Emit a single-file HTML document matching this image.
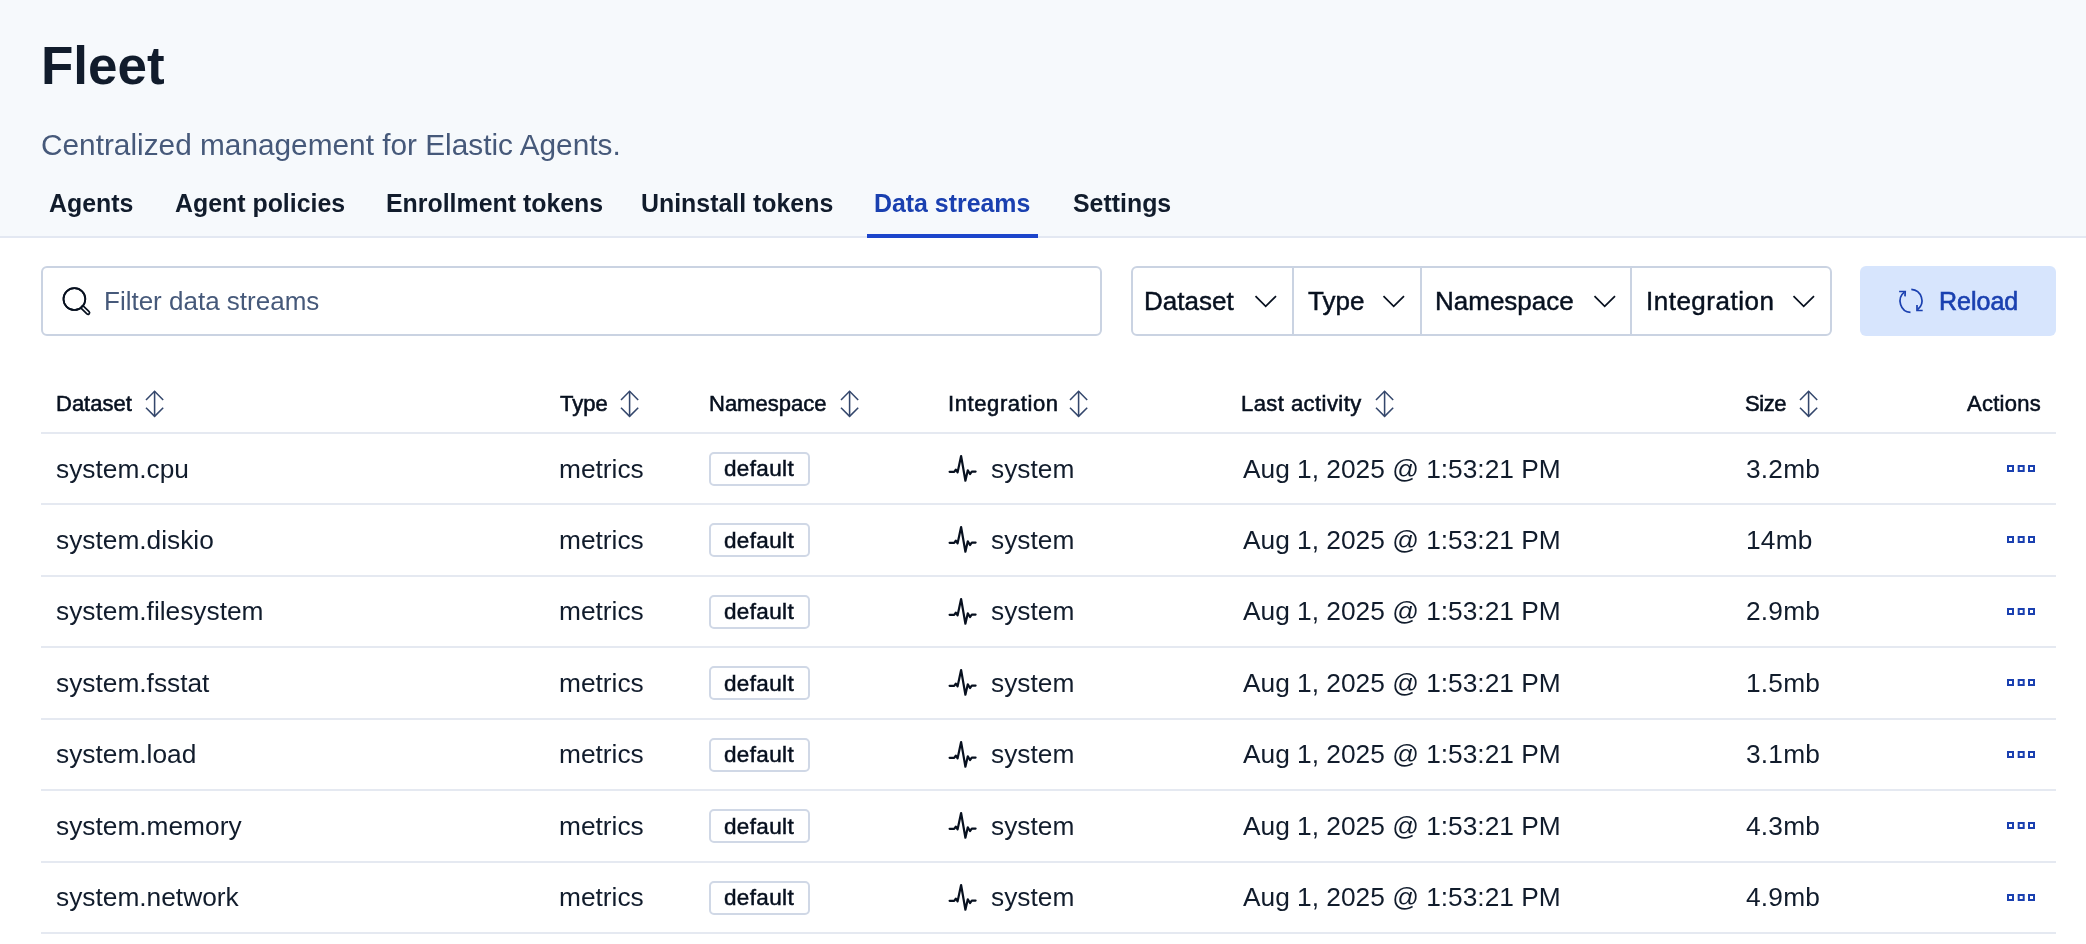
<!DOCTYPE html>
<html><head><meta charset="utf-8"><title>Fleet</title>
<style>
html,body{margin:0;padding:0;width:2086px;height:944px;overflow:hidden;background:#FFFFFF;font-family:"Liberation Sans",sans-serif;}
.a{position:absolute;white-space:nowrap;line-height:1;will-change:transform;}
.box{position:absolute;box-sizing:border-box;}
svg{position:absolute;overflow:visible;}
</style></head><body>
<div class="box" style="left:0;top:0;width:2086px;height:236px;background:#F6F9FC;"></div>
<div class="box" style="left:0;top:236px;width:2086px;height:2px;background:#E3E8F2;"></div>
<div class="a" style="left:41.30px;top:39.14px;font-size:53px;font-weight:700;color:#111C2C;">Fleet</div>
<div class="a" style="left:41.20px;top:130.07px;font-size:29.8px;font-weight:400;color:#46597A;">Centralized management for Elastic Agents.</div>
<div class="a" style="left:48.60px;top:191.42px;font-size:24.9px;font-weight:700;color:#111C2C;">Agents</div>
<div class="a" style="left:175.20px;top:191.42px;font-size:24.9px;font-weight:700;color:#111C2C;">Agent policies</div>
<div class="a" style="left:385.70px;top:191.42px;font-size:24.9px;font-weight:700;color:#111C2C;">Enrollment tokens</div>
<div class="a" style="left:641.20px;top:191.42px;font-size:24.9px;font-weight:700;color:#111C2C;">Uninstall tokens</div>
<div class="a" style="left:873.90px;top:191.42px;font-size:24.9px;font-weight:700;color:#1A40B0;">Data streams</div>
<div class="a" style="left:1073.30px;top:191.42px;font-size:24.9px;font-weight:700;color:#111C2C;">Settings</div>
<div class="box" style="left:867px;top:234px;width:171px;height:4px;background:#1C45CB;"></div>
<div class="box" style="left:41px;top:266px;width:1061px;height:70px;border:2px solid #CAD3E2;border-radius:6px;background:#fff;"></div>
<svg style="left:55px;top:280px" width="45" height="42" viewBox="0 0 45 42"><circle cx="19.4" cy="19.1" r="10.9" fill="none" stroke="#07101F" stroke-width="1.7"/><path d="M27.6 27.6 L33.0 32.8" stroke="#07101F" stroke-width="4.8" stroke-linecap="round"/><path d="M27.6 27.6 L33.0 32.8" stroke="#fff" stroke-width="1.4" stroke-linecap="round"/><circle cx="19.4" cy="19.1" r="10.9" fill="none" stroke="#07101F" stroke-width="1.7"/></svg>
<div class="a" style="left:103.70px;top:287.99px;font-size:26px;font-weight:400;color:#46597A;">Filter data streams</div>
<div class="box" style="left:1131px;top:266px;width:701px;height:70px;border:2px solid #CAD3E2;border-radius:6px;background:#fff;"></div>
<div class="box" style="left:1291.5px;top:267px;width:2px;height:68px;background:#CAD3E2;"></div>
<div class="box" style="left:1419.6px;top:267px;width:2px;height:68px;background:#CAD3E2;"></div>
<div class="box" style="left:1630px;top:267px;width:2px;height:68px;background:#CAD3E2;"></div>
<div class="a" style="left:1144.40px;top:288.19px;font-size:26px;font-weight:400;color:#07101F;-webkit-text-stroke:0.45px #07101F;">Dataset</div>
<svg style="left:1253.5px;top:294px" width="24" height="15" viewBox="0 0 24 15"><path d="M1.5 2.1 L11.7 12.3 L22 2.1" fill="none" stroke="#07101F" stroke-width="1.75"/></svg>
<div class="a" style="left:1308.00px;top:288.19px;font-size:26px;font-weight:400;color:#07101F;-webkit-text-stroke:0.45px #07101F;">Type</div>
<svg style="left:1381.8px;top:294px" width="24" height="15" viewBox="0 0 24 15"><path d="M1.5 2.1 L11.7 12.3 L22 2.1" fill="none" stroke="#07101F" stroke-width="1.75"/></svg>
<div class="a" style="left:1435.40px;top:288.19px;font-size:26px;font-weight:400;color:#07101F;-webkit-text-stroke:0.45px #07101F;">Namespace</div>
<svg style="left:1593.0px;top:294px" width="24" height="15" viewBox="0 0 24 15"><path d="M1.5 2.1 L11.7 12.3 L22 2.1" fill="none" stroke="#07101F" stroke-width="1.75"/></svg>
<div class="a" style="left:1645.60px;top:288.19px;font-size:26px;font-weight:400;color:#07101F;-webkit-text-stroke:0.45px #07101F;letter-spacing:0.5px;">Integration</div>
<svg style="left:1792.0px;top:294px" width="24" height="15" viewBox="0 0 24 15"><path d="M1.5 2.1 L11.7 12.3 L22 2.1" fill="none" stroke="#07101F" stroke-width="1.75"/></svg>
<div class="box" style="left:1860px;top:266px;width:196px;height:70px;border-radius:6px;background:#D7E5FD;"></div>
<svg style="left:1893px;top:283px" width="36" height="36" viewBox="0 0 36 36"><g fill="none" stroke="#1A40B0" stroke-width="1.7"><path d="M17.5 29.4 A11.4 11.4 0 0 1 11.3 9.2"/><path d="M6.1 8.5 L12.2 8.5 L12.0 13.4"/><path d="M18.3 6.3 A11.4 11.4 0 0 1 24.6 26.6"/><path d="M24 22.1 L24 27.5 L29.7 27.5"/></g></svg>
<div class="a" style="left:1938.50px;top:288.94px;font-size:25px;font-weight:400;color:#1A40B0;-webkit-text-stroke:0.6px #1A40B0;">Reload</div>
<div class="a" style="left:55.50px;top:392.78px;font-size:22px;font-weight:400;color:#07101F;-webkit-text-stroke:0.55px #07101F;letter-spacing:0px;">Dataset</div>
<svg style="left:145px;top:390px" width="20" height="28" viewBox="0 0 20 28"><g fill="none" stroke="#34476C" stroke-width="1.55"><path d="M1 10 L9.6 1.3 L18.2 10"/><path d="M1 17.7 L9.6 26.3 L18.2 17.7"/><path d="M9.6 1.3 L9.6 26.3"/></g></svg>
<div class="a" style="left:559.50px;top:392.78px;font-size:22px;font-weight:400;color:#07101F;-webkit-text-stroke:0.55px #07101F;letter-spacing:0px;">Type</div>
<svg style="left:620px;top:390px" width="20" height="28" viewBox="0 0 20 28"><g fill="none" stroke="#34476C" stroke-width="1.55"><path d="M1 10 L9.6 1.3 L18.2 10"/><path d="M1 17.7 L9.6 26.3 L18.2 17.7"/><path d="M9.6 1.3 L9.6 26.3"/></g></svg>
<div class="a" style="left:708.60px;top:392.78px;font-size:22px;font-weight:400;color:#07101F;-webkit-text-stroke:0.55px #07101F;letter-spacing:0px;">Namespace</div>
<svg style="left:840px;top:390px" width="20" height="28" viewBox="0 0 20 28"><g fill="none" stroke="#34476C" stroke-width="1.55"><path d="M1 10 L9.6 1.3 L18.2 10"/><path d="M1 17.7 L9.6 26.3 L18.2 17.7"/><path d="M9.6 1.3 L9.6 26.3"/></g></svg>
<div class="a" style="left:947.60px;top:392.78px;font-size:22px;font-weight:400;color:#07101F;-webkit-text-stroke:0.55px #07101F;letter-spacing:0.6px;">Integration</div>
<svg style="left:1069.3px;top:390px" width="20" height="28" viewBox="0 0 20 28"><g fill="none" stroke="#34476C" stroke-width="1.55"><path d="M1 10 L9.6 1.3 L18.2 10"/><path d="M1 17.7 L9.6 26.3 L18.2 17.7"/><path d="M9.6 1.3 L9.6 26.3"/></g></svg>
<div class="a" style="left:1241.20px;top:392.78px;font-size:22px;font-weight:400;color:#07101F;-webkit-text-stroke:0.55px #07101F;letter-spacing:0.44px;">Last activity</div>
<svg style="left:1375.3px;top:390px" width="20" height="28" viewBox="0 0 20 28"><g fill="none" stroke="#34476C" stroke-width="1.55"><path d="M1 10 L9.6 1.3 L18.2 10"/><path d="M1 17.7 L9.6 26.3 L18.2 17.7"/><path d="M9.6 1.3 L9.6 26.3"/></g></svg>
<div class="a" style="left:1745.40px;top:392.78px;font-size:22px;font-weight:400;color:#07101F;-webkit-text-stroke:0.55px #07101F;letter-spacing:-0.4px;">Size</div>
<svg style="left:1799px;top:390px" width="20" height="28" viewBox="0 0 20 28"><g fill="none" stroke="#34476C" stroke-width="1.55"><path d="M1 10 L9.6 1.3 L18.2 10"/><path d="M1 17.7 L9.6 26.3 L18.2 17.7"/><path d="M9.6 1.3 L9.6 26.3"/></g></svg>
<div class="a" style="left:1967.00px;top:392.78px;font-size:22px;font-weight:400;color:#07101F;-webkit-text-stroke:0.55px #07101F;letter-spacing:0.25px;">Actions</div>
<div class="box" style="left:41px;top:432px;width:2015px;height:2px;background:#E5E9F1;"></div>
<div class="box" style="left:41px;top:503px;width:2015px;height:2px;background:#E5E9F1;"></div>
<div class="box" style="left:41px;top:575px;width:2015px;height:2px;background:#E5E9F1;"></div>
<div class="box" style="left:41px;top:646px;width:2015px;height:2px;background:#E5E9F1;"></div>
<div class="box" style="left:41px;top:718px;width:2015px;height:2px;background:#E5E9F1;"></div>
<div class="box" style="left:41px;top:789px;width:2015px;height:2px;background:#E5E9F1;"></div>
<div class="box" style="left:41px;top:861px;width:2015px;height:2px;background:#E5E9F1;"></div>
<div class="box" style="left:41px;top:932px;width:2015px;height:2px;background:#E5E9F1;"></div>
<div class="a" style="left:55.50px;top:455.54px;font-size:26.3px;font-weight:400;color:#111C2C;">system.cpu</div>
<div class="a" style="left:558.60px;top:455.54px;font-size:26.3px;font-weight:400;color:#111C2C;">metrics</div>
<div class="box" style="left:709px;top:452px;width:101px;height:34px;border:2px solid #D0D8E6;border-radius:5px;background:#fff;"></div>
<div class="a" style="left:724.40px;top:458.35px;font-size:22.5px;font-weight:400;color:#07101F;-webkit-text-stroke:0.5px #07101F;letter-spacing:0.35px;">default</div>
<svg style="left:940px;top:448.0px" width="45" height="42" viewBox="0 0 45 42"><path d="M9.6 23.8 L14.2 23.8 L15.8 21.6 L17.6 24.3 L21.1 8 L25.4 32.7 L27.8 22.3 L30 26 L31.8 23.6 L35.6 23.6" fill="none" stroke="#07101F" stroke-width="2.2" stroke-linejoin="round" stroke-linecap="round"/></svg>
<div class="a" style="left:990.70px;top:455.54px;font-size:26.3px;font-weight:400;color:#111C2C;">system</div>
<div class="a" style="left:1242.50px;top:455.54px;font-size:26.3px;font-weight:400;color:#111C2C;">Aug 1, 2025 @ 1:53:21 PM</div>
<div class="a" style="left:1746.00px;top:455.54px;font-size:26.3px;font-weight:400;color:#111C2C;letter-spacing:0.2px;">3.2mb</div>
<svg style="left:2000px;top:455.0px" width="42" height="27" viewBox="0 0 42 27"><g fill="none" stroke="#1A40B0" stroke-width="2"><rect x="8" y="11" width="5" height="5"/><rect x="18.7" y="11" width="5" height="5"/><rect x="29" y="11" width="5" height="5"/></g></svg>
<div class="a" style="left:55.50px;top:526.97px;font-size:26.3px;font-weight:400;color:#111C2C;">system.diskio</div>
<div class="a" style="left:558.60px;top:526.97px;font-size:26.3px;font-weight:400;color:#111C2C;">metrics</div>
<div class="box" style="left:709px;top:523px;width:101px;height:34px;border:2px solid #D0D8E6;border-radius:5px;background:#fff;"></div>
<div class="a" style="left:724.40px;top:529.78px;font-size:22.5px;font-weight:400;color:#07101F;-webkit-text-stroke:0.5px #07101F;letter-spacing:0.35px;">default</div>
<svg style="left:940px;top:519.4px" width="45" height="42" viewBox="0 0 45 42"><path d="M9.6 23.8 L14.2 23.8 L15.8 21.6 L17.6 24.3 L21.1 8 L25.4 32.7 L27.8 22.3 L30 26 L31.8 23.6 L35.6 23.6" fill="none" stroke="#07101F" stroke-width="2.2" stroke-linejoin="round" stroke-linecap="round"/></svg>
<div class="a" style="left:990.70px;top:526.97px;font-size:26.3px;font-weight:400;color:#111C2C;">system</div>
<div class="a" style="left:1242.50px;top:526.97px;font-size:26.3px;font-weight:400;color:#111C2C;">Aug 1, 2025 @ 1:53:21 PM</div>
<div class="a" style="left:1746.00px;top:526.97px;font-size:26.3px;font-weight:400;color:#111C2C;letter-spacing:0.2px;">14mb</div>
<svg style="left:2000px;top:526.4px" width="42" height="27" viewBox="0 0 42 27"><g fill="none" stroke="#1A40B0" stroke-width="2"><rect x="8" y="11" width="5" height="5"/><rect x="18.7" y="11" width="5" height="5"/><rect x="29" y="11" width="5" height="5"/></g></svg>
<div class="a" style="left:55.50px;top:598.40px;font-size:26.3px;font-weight:400;color:#111C2C;">system.filesystem</div>
<div class="a" style="left:558.60px;top:598.40px;font-size:26.3px;font-weight:400;color:#111C2C;">metrics</div>
<div class="box" style="left:709px;top:595px;width:101px;height:34px;border:2px solid #D0D8E6;border-radius:5px;background:#fff;"></div>
<div class="a" style="left:724.40px;top:601.21px;font-size:22.5px;font-weight:400;color:#07101F;-webkit-text-stroke:0.5px #07101F;letter-spacing:0.35px;">default</div>
<svg style="left:940px;top:590.9px" width="45" height="42" viewBox="0 0 45 42"><path d="M9.6 23.8 L14.2 23.8 L15.8 21.6 L17.6 24.3 L21.1 8 L25.4 32.7 L27.8 22.3 L30 26 L31.8 23.6 L35.6 23.6" fill="none" stroke="#07101F" stroke-width="2.2" stroke-linejoin="round" stroke-linecap="round"/></svg>
<div class="a" style="left:990.70px;top:598.40px;font-size:26.3px;font-weight:400;color:#111C2C;">system</div>
<div class="a" style="left:1242.50px;top:598.40px;font-size:26.3px;font-weight:400;color:#111C2C;">Aug 1, 2025 @ 1:53:21 PM</div>
<div class="a" style="left:1746.00px;top:598.40px;font-size:26.3px;font-weight:400;color:#111C2C;letter-spacing:0.2px;">2.9mb</div>
<svg style="left:2000px;top:597.9px" width="42" height="27" viewBox="0 0 42 27"><g fill="none" stroke="#1A40B0" stroke-width="2"><rect x="8" y="11" width="5" height="5"/><rect x="18.7" y="11" width="5" height="5"/><rect x="29" y="11" width="5" height="5"/></g></svg>
<div class="a" style="left:55.50px;top:669.83px;font-size:26.3px;font-weight:400;color:#111C2C;">system.fsstat</div>
<div class="a" style="left:558.60px;top:669.83px;font-size:26.3px;font-weight:400;color:#111C2C;">metrics</div>
<div class="box" style="left:709px;top:666px;width:101px;height:34px;border:2px solid #D0D8E6;border-radius:5px;background:#fff;"></div>
<div class="a" style="left:724.40px;top:672.64px;font-size:22.5px;font-weight:400;color:#07101F;-webkit-text-stroke:0.5px #07101F;letter-spacing:0.35px;">default</div>
<svg style="left:940px;top:662.3px" width="45" height="42" viewBox="0 0 45 42"><path d="M9.6 23.8 L14.2 23.8 L15.8 21.6 L17.6 24.3 L21.1 8 L25.4 32.7 L27.8 22.3 L30 26 L31.8 23.6 L35.6 23.6" fill="none" stroke="#07101F" stroke-width="2.2" stroke-linejoin="round" stroke-linecap="round"/></svg>
<div class="a" style="left:990.70px;top:669.83px;font-size:26.3px;font-weight:400;color:#111C2C;">system</div>
<div class="a" style="left:1242.50px;top:669.83px;font-size:26.3px;font-weight:400;color:#111C2C;">Aug 1, 2025 @ 1:53:21 PM</div>
<div class="a" style="left:1746.00px;top:669.83px;font-size:26.3px;font-weight:400;color:#111C2C;letter-spacing:0.2px;">1.5mb</div>
<svg style="left:2000px;top:669.3px" width="42" height="27" viewBox="0 0 42 27"><g fill="none" stroke="#1A40B0" stroke-width="2"><rect x="8" y="11" width="5" height="5"/><rect x="18.7" y="11" width="5" height="5"/><rect x="29" y="11" width="5" height="5"/></g></svg>
<div class="a" style="left:55.50px;top:741.26px;font-size:26.3px;font-weight:400;color:#111C2C;">system.load</div>
<div class="a" style="left:558.60px;top:741.26px;font-size:26.3px;font-weight:400;color:#111C2C;">metrics</div>
<div class="box" style="left:709px;top:738px;width:101px;height:34px;border:2px solid #D0D8E6;border-radius:5px;background:#fff;"></div>
<div class="a" style="left:724.40px;top:744.07px;font-size:22.5px;font-weight:400;color:#07101F;-webkit-text-stroke:0.5px #07101F;letter-spacing:0.35px;">default</div>
<svg style="left:940px;top:733.7px" width="45" height="42" viewBox="0 0 45 42"><path d="M9.6 23.8 L14.2 23.8 L15.8 21.6 L17.6 24.3 L21.1 8 L25.4 32.7 L27.8 22.3 L30 26 L31.8 23.6 L35.6 23.6" fill="none" stroke="#07101F" stroke-width="2.2" stroke-linejoin="round" stroke-linecap="round"/></svg>
<div class="a" style="left:990.70px;top:741.26px;font-size:26.3px;font-weight:400;color:#111C2C;">system</div>
<div class="a" style="left:1242.50px;top:741.26px;font-size:26.3px;font-weight:400;color:#111C2C;">Aug 1, 2025 @ 1:53:21 PM</div>
<div class="a" style="left:1746.00px;top:741.26px;font-size:26.3px;font-weight:400;color:#111C2C;letter-spacing:0.2px;">3.1mb</div>
<svg style="left:2000px;top:740.7px" width="42" height="27" viewBox="0 0 42 27"><g fill="none" stroke="#1A40B0" stroke-width="2"><rect x="8" y="11" width="5" height="5"/><rect x="18.7" y="11" width="5" height="5"/><rect x="29" y="11" width="5" height="5"/></g></svg>
<div class="a" style="left:55.50px;top:812.69px;font-size:26.3px;font-weight:400;color:#111C2C;">system.memory</div>
<div class="a" style="left:558.60px;top:812.69px;font-size:26.3px;font-weight:400;color:#111C2C;">metrics</div>
<div class="box" style="left:709px;top:809px;width:101px;height:34px;border:2px solid #D0D8E6;border-radius:5px;background:#fff;"></div>
<div class="a" style="left:724.40px;top:815.50px;font-size:22.5px;font-weight:400;color:#07101F;-webkit-text-stroke:0.5px #07101F;letter-spacing:0.35px;">default</div>
<svg style="left:940px;top:805.2px" width="45" height="42" viewBox="0 0 45 42"><path d="M9.6 23.8 L14.2 23.8 L15.8 21.6 L17.6 24.3 L21.1 8 L25.4 32.7 L27.8 22.3 L30 26 L31.8 23.6 L35.6 23.6" fill="none" stroke="#07101F" stroke-width="2.2" stroke-linejoin="round" stroke-linecap="round"/></svg>
<div class="a" style="left:990.70px;top:812.69px;font-size:26.3px;font-weight:400;color:#111C2C;">system</div>
<div class="a" style="left:1242.50px;top:812.69px;font-size:26.3px;font-weight:400;color:#111C2C;">Aug 1, 2025 @ 1:53:21 PM</div>
<div class="a" style="left:1746.00px;top:812.69px;font-size:26.3px;font-weight:400;color:#111C2C;letter-spacing:0.2px;">4.3mb</div>
<svg style="left:2000px;top:812.2px" width="42" height="27" viewBox="0 0 42 27"><g fill="none" stroke="#1A40B0" stroke-width="2"><rect x="8" y="11" width="5" height="5"/><rect x="18.7" y="11" width="5" height="5"/><rect x="29" y="11" width="5" height="5"/></g></svg>
<div class="a" style="left:55.50px;top:884.12px;font-size:26.3px;font-weight:400;color:#111C2C;">system.network</div>
<div class="a" style="left:558.60px;top:884.12px;font-size:26.3px;font-weight:400;color:#111C2C;">metrics</div>
<div class="box" style="left:709px;top:881px;width:101px;height:34px;border:2px solid #D0D8E6;border-radius:5px;background:#fff;"></div>
<div class="a" style="left:724.40px;top:886.93px;font-size:22.5px;font-weight:400;color:#07101F;-webkit-text-stroke:0.5px #07101F;letter-spacing:0.35px;">default</div>
<svg style="left:940px;top:876.6px" width="45" height="42" viewBox="0 0 45 42"><path d="M9.6 23.8 L14.2 23.8 L15.8 21.6 L17.6 24.3 L21.1 8 L25.4 32.7 L27.8 22.3 L30 26 L31.8 23.6 L35.6 23.6" fill="none" stroke="#07101F" stroke-width="2.2" stroke-linejoin="round" stroke-linecap="round"/></svg>
<div class="a" style="left:990.70px;top:884.12px;font-size:26.3px;font-weight:400;color:#111C2C;">system</div>
<div class="a" style="left:1242.50px;top:884.12px;font-size:26.3px;font-weight:400;color:#111C2C;">Aug 1, 2025 @ 1:53:21 PM</div>
<div class="a" style="left:1746.00px;top:884.12px;font-size:26.3px;font-weight:400;color:#111C2C;letter-spacing:0.2px;">4.9mb</div>
<svg style="left:2000px;top:883.6px" width="42" height="27" viewBox="0 0 42 27"><g fill="none" stroke="#1A40B0" stroke-width="2"><rect x="8" y="11" width="5" height="5"/><rect x="18.7" y="11" width="5" height="5"/><rect x="29" y="11" width="5" height="5"/></g></svg>
</body></html>
